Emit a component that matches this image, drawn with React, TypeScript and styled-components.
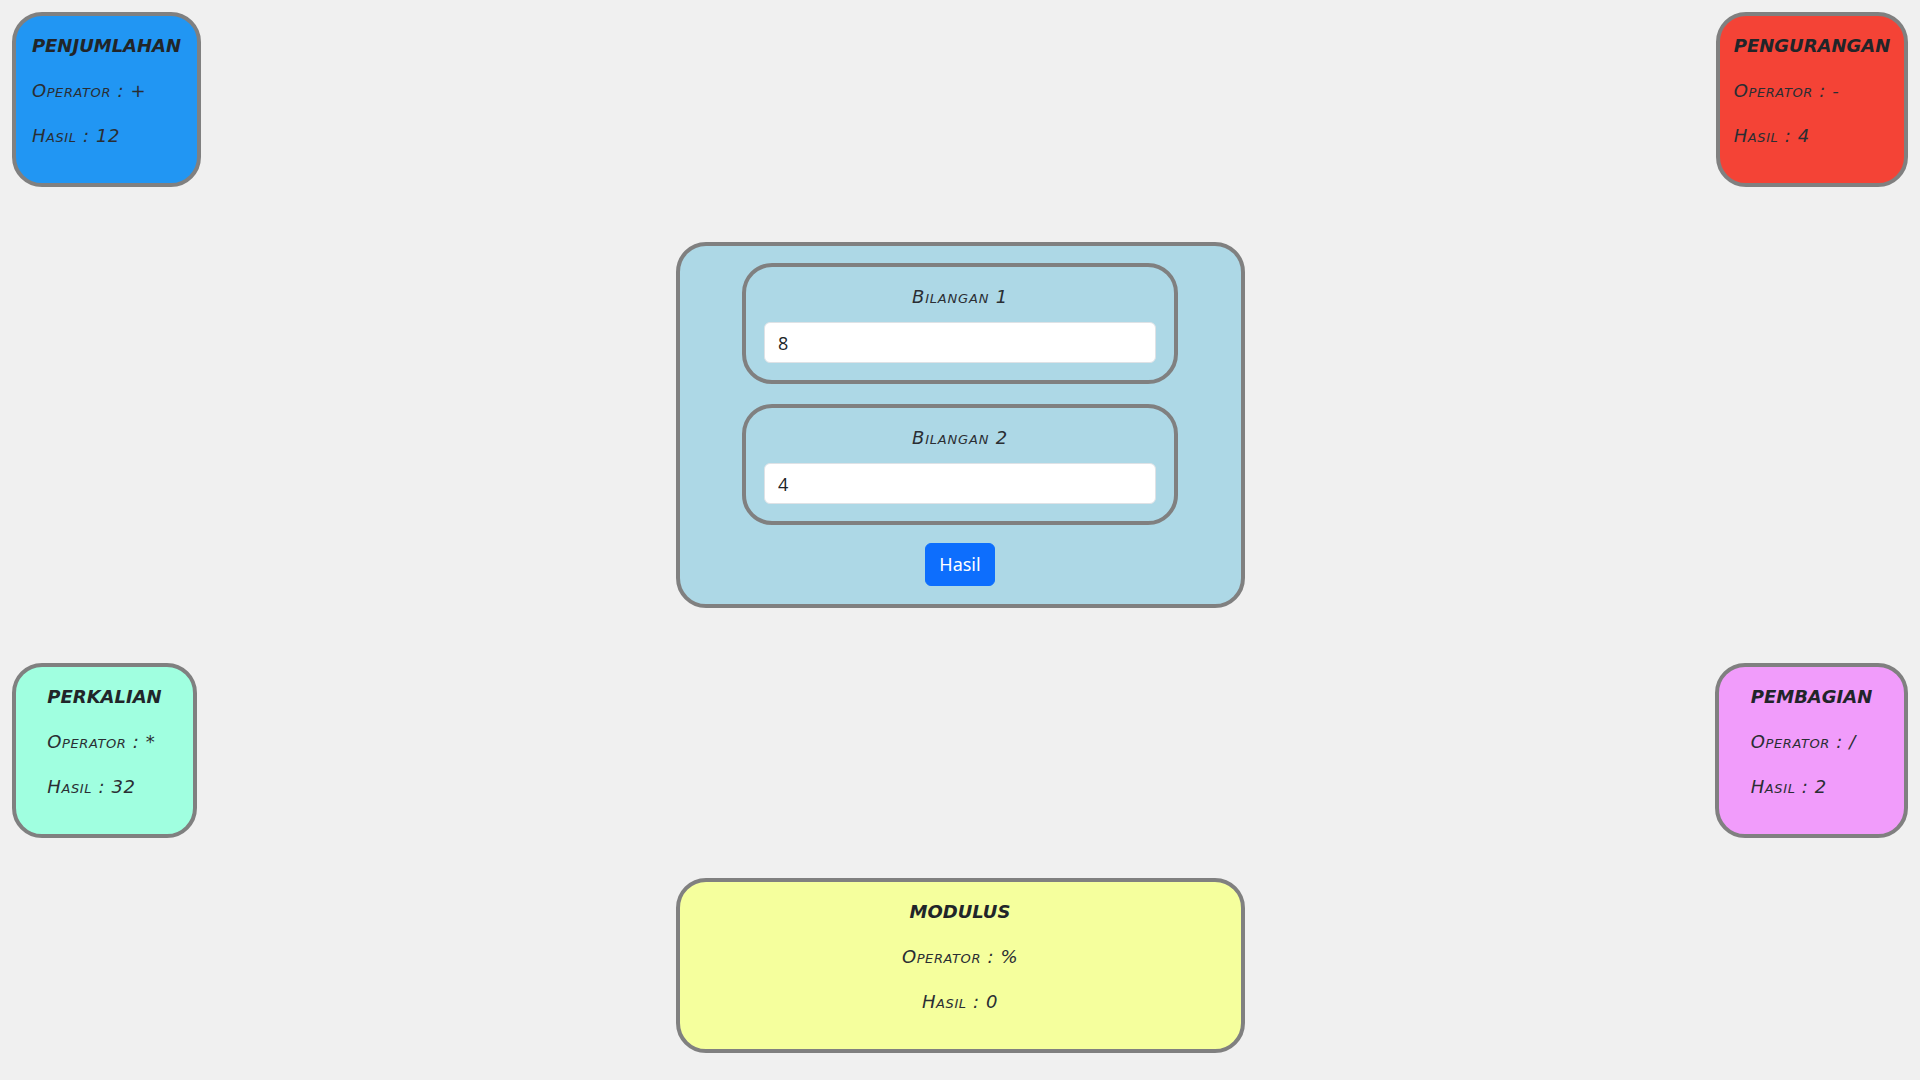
import React from "react";
import styled, { createGlobalStyle } from "styled-components";

const GlobalStyle = createGlobalStyle`
  *, *::before, *::after { box-sizing: border-box; }
  html, body { margin: 0; padding: 0; }
  body {
    background: #f0f0f0;
    color: #212529;
    font-family: "DejaVu Sans", "Open Sans", sans-serif;
    font-size: 18px;
    line-height: 1.5;
  }
`;

const Page = styled.main`
  display: flex;
  flex-direction: column;
  padding: 12px;
`;

const CornerRow = styled.div<{ $mt?: number }>`
  display: flex;
  justify-content: space-between;
  align-items: flex-start;
  margin-top: ${(p) => p.$mt ?? 0}px;
`;

const Card = styled.section<{ $bg: string; $w: number; $center?: boolean }>`
  width: ${(p) => p.$w}px;
  background: ${(p) => p.$bg};
  border: 4px solid #808080;
  border-radius: 30px;
  padding: 16px 0;
  display: flex;
  justify-content: center;
  text-align: ${(p) => (p.$center ? "center" : "left")};
`;

const CardBody = styled.div`
  display: flex;
  flex-direction: column;
`;

const CardTitle = styled.h5`
  margin: 0 0 18px;
  font-size: 18px;
  line-height: 27px;
  font-weight: 700;
  font-style: italic;
  color: #212529;
`;

const CardLine = styled.p`
  margin: 0 0 18px;
  font-size: 18px;
  line-height: 27px;
  font-weight: 200;
  font-style: italic;
  font-variant: small-caps;
  letter-spacing: 0.6px;
  color: #2a2e33;
`;

const InputPanel = styled.form`
  align-self: center;
  width: 569px;
  margin-top: 55px;
  background: #add8e6;
  border: 4px solid #808080;
  border-radius: 30px;
  padding: 17px 0 18px;
  display: flex;
  flex-direction: column;
  align-items: center;
  gap: 20px;
`;

const Field = styled.label`
  width: 436px;
  border: 4px solid #808080;
  border-radius: 30px;
  padding: 16px 18px 17px;
  display: flex;
  flex-direction: column;
  align-items: stretch;
  gap: 12px;
`;

const FieldLabel = styled.span`
  text-align: center;
  font-size: 18px;
  line-height: 27px;
  font-weight: 200;
  font-style: italic;
  font-variant: small-caps;
  letter-spacing: 0.8px;
  color: #2a2e33;
`;

const NumberInput = styled.input`
  height: 41px;
  width: 100%;
  background: #fff;
  border: 1px solid #dee2e6;
  border-radius: 6px;
  padding: 0 13px;
  font-family: "Open Sans", Lato, sans-serif;
  font-size: 18px;
  font-weight: 400;
  color: #212529;
  outline: none;
`;

const SubmitButton = styled.button`
  margin-top: -2px;
  height: 43px;
  padding: 0 13.5px;
  background: #0d6efd;
  color: #fff;
  border: 1px solid #0d6efd;
  border-radius: 6px;
  font-family: "Noto Sans", "Open Sans", sans-serif;
  font-size: 18px;
  line-height: 27px;
  cursor: pointer;
`;

const ModulusWrap = styled.div`
  display: flex;
  justify-content: center;
  margin-top: 40px;
`;

type Op = { title: string; op: string; result: string; bg: string; w: number };

const top: Op[] = [
  { title: "PENJUMLAHAN", op: "+", result: "12", bg: "#2196f3", w: 189 },
  { title: "PENGURANGAN", op: "-", result: "4", bg: "#f44336", w: 192 },
];
const bottom: Op[] = [
  { title: "PERKALIAN", op: "*", result: "32", bg: "#a0ffe0", w: 185 },
  { title: "PEMBAGIAN", op: "/", result: "2", bg: "#f19cfb", w: 193 },
];

function ResultCard({ o, center }: { o: Op; center?: boolean }) {
  return (
    <Card $bg={o.bg} $w={o.w} $center={center}>
      <CardBody>
        <CardTitle>{o.title}</CardTitle>
        <CardLine>Operator : {o.op}</CardLine>
        <CardLine>Hasil : {o.result}</CardLine>
      </CardBody>
    </Card>
  );
}

export default function App() {
  return (
    <>
      <GlobalStyle />
      <Page>
        <CornerRow>
          {top.map((o) => (
            <ResultCard key={o.title} o={o} />
          ))}
        </CornerRow>
        <InputPanel onSubmit={(e) => e.preventDefault()}>
          <Field>
            <FieldLabel>Bilangan 1</FieldLabel>
            <NumberInput type="text" defaultValue="8" />
          </Field>
          <Field>
            <FieldLabel>Bilangan 2</FieldLabel>
            <NumberInput type="text" defaultValue="4" />
          </Field>
          <SubmitButton type="submit">Hasil</SubmitButton>
        </InputPanel>
        <CornerRow $mt={55}>
          {bottom.map((o) => (
            <ResultCard key={o.title} o={o} />
          ))}
        </CornerRow>
        <ModulusWrap>
          <ResultCard
            center
            o={{ title: "MODULUS", op: "%", result: "0", bg: "#f5ff9d", w: 569 }}
          />
        </ModulusWrap>
      </Page>
    </>
  );
}
